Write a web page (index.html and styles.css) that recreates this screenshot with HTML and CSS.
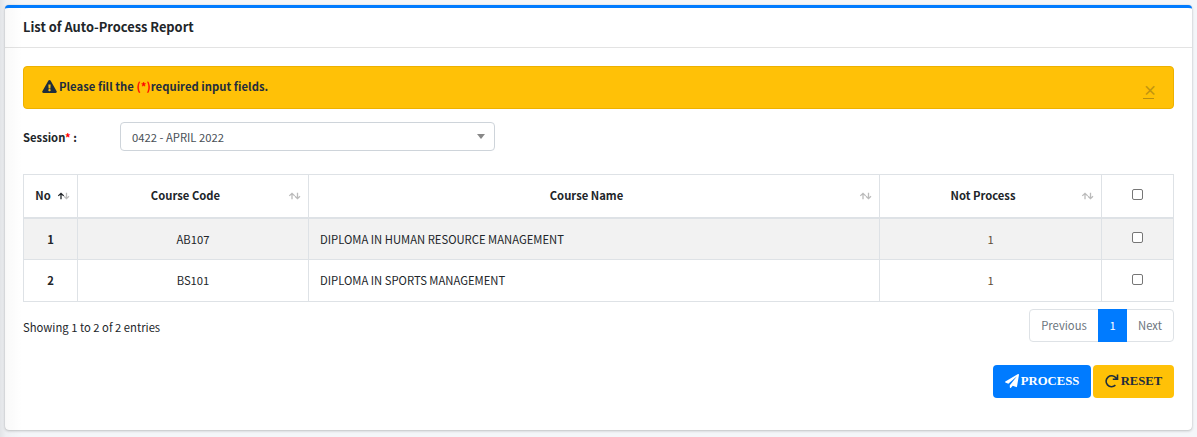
FILE: index.html
```html
<!DOCTYPE html>
<html lang="en">
<head>
<meta charset="utf-8">
<title>List of Auto-Process Report</title>
<link rel="stylesheet" href="styles.css">
</head>
<body>
<svg width="0" height="0" class="defs">
  <symbol id="sort" viewBox="0 0 13 8">
    <path class="down" d="M9.500 .8V6.300M7 4.200L9.500 6.700L12 4.200"/>
    <path class="up" d="M4 7.200V1.700M1.300 3.900L4 1.300L6.700 3.900"/>
  </symbol>
</svg>
<main class="card">
  <header class="card-header"><h1 class="card-title">List of Auto-Process Report</h1></header>
  <div class="card-body">
    <div class="alert">
      <svg class="warn" viewBox="0 0 576 512"><path fill="currentColor" d="M569.5 440C588 472 564.800 512 527.900 512H48.100c-36.900 0-60-40.100-41.600-72L246.400 24c18.500-32 64.700-32 83.200 0l239.900 416zM288 354c-25.400 0-46 20.600-46 46s20.600 46 46 46 46-20.600 46-46-20.600-46-46-46zm-43.700-165.300l7.400 136c.3 6.400 5.600 11.300 12 11.300h48.500c6.400 0 11.600-5 12-11.300l7.400-136c.4-6.900-5.100-12.700-12-12.700h-63.400c-6.900 0-12.300 5.800-11.900 12.700z"/></svg>
      <p class="alert-text">Please fill the <span class="red">(*)</span>required input fields.</p>
      <a class="close">×</a>
    </div>
    <div class="form-row">
      <label class="label">Session<span class="red">*</span> :</label>
      <div class="select"><span>0422 - APRIL 2022</span><i class="caret"></i></div>
    </div>
    <table class="table">
      <colgroup><col class="c-no"><col class="c-code"><col class="c-name"><col class="c-not"><col class="c-check"></colgroup>
      <thead>
        <tr>
          <th><div class="head"><span>No</span><svg class="sort asc"><use href="#sort"/></svg></div></th>
          <th><div class="head"><span>Course Code</span><svg class="sort"><use href="#sort"/></svg></div></th>
          <th><div class="head"><span>Course Name</span><svg class="sort"><use href="#sort"/></svg></div></th>
          <th><div class="head"><span>Not Process</span><svg class="sort"><use href="#sort"/></svg></div></th>
          <th><span class="check"></span></th>
        </tr>
      </thead>
      <tbody>
        <tr class="odd"><td class="num">1</td><td>AB107</td><td class="name">DIPLOMA IN HUMAN RESOURCE MANAGEMENT</td><td class="count">1</td><td><span class="check"></span></td></tr>
        <tr class="even"><td class="num">2</td><td>BS101</td><td class="name">DIPLOMA IN SPORTS MANAGEMENT</td><td class="count">1</td><td><span class="check"></span></td></tr>
      </tbody>
    </table>
    <div class="table-footer">
      <span class="info">Showing 1 to 2 of 2 entries</span>
      <nav class="pages"><a class="page prev">Previous</a><a class="page active">1</a><a class="page next">Next</a></nav>
    </div>
    <div class="actions">
      <button class="btn primary"><svg class="btn-icon" viewBox="0 0 512 512"><path fill="currentColor" d="M476 3.200L12.500 270.600c-18.100 10.400-15.800 35.600 2.200 43.200L121 358.400l287.300-253.200c5.500-4.900 13.300 2.600 8.600 8.300L176 407v80.500c0 23.600 28.500 32.900 42.500 15.800L282 426l124.600 52.200c14.200 6 30.400-2.900 33-18.200l72-432C515 7.800 493.300-6.800 476 3.200z"/></svg><span>PROCESS</span></button>
      <button class="btn warning"><svg class="btn-icon" viewBox="0 0 14 14"><path fill="none" stroke="currentColor" stroke-width="1.600" d="M10.400 11.200A5.500 5.500 0 1 1 10.900 3.800L12.300 5.200M12.500 .6V5.300H7.800"/></svg><span>RESET</span></button>
    </div>
  </div>
</main>
</body>
</html>
```
FILE: styles.css
```css
* { box-sizing: border-box; }
body {
  margin: 0;
  height: 437px;
  padding: 5px 5px 7px;
  overflow: hidden;
  background: #f4f6f9;
  color: #212529;
  font: 11.25px/18px "Noto Sans CJK SC", "Noto Sans", sans-serif;
}
/* shadow cast by the sidebar edge */
body::after {
  content: "";
  position: absolute;
  inset: 0 auto 0 0;
  width: 22px;
  background: linear-gradient(90deg, rgba(0,0,0,.075), rgba(0,0,0,.025) 6px, rgba(0,0,0,0));
  pointer-events: none;
}
.defs { position: absolute; }
.card {
  height: 425px;
  background: #fff;
  border-top: 3px solid #007bff;
  border-radius: 4px;
  box-shadow: 0 0 1px rgba(0,0,0,.2), 0 1px 3px rgba(0,0,0,.2);
}
.card-header { height: 40px; border-bottom: 1px solid #e3e3e3; padding: 10px 18px; }
.card-title { margin: 0; font-size: 12.85px; line-height: 18px; font-weight: 700; }
.card-body { padding: 18px; }
.alert {
  height: 43px;
  display: flex;
  align-items: center;
  padding: 0 18px;
  background: #ffc107;
  border: 1px solid #edb100;
  border-radius: 4px;
  color: #1f2d3d;
}
.warn { width: 15px; height: 13px; margin: -2px 2px 0 0; }
.alert-text { margin: 0 0 3px; flex: 1; font-weight: 700; letter-spacing: .03px; }
.red { color: #f00; }
.close { width: 11px; margin: 5px 1px 0 0; border-bottom: 1px solid #b98f10; color: #c2950f; text-align: center; font-size: 14px; font-weight: 700; line-height: 17px; }
.form-row { display: flex; align-items: center; height: 29px; margin-top: 13px; }
.label { width: 97px; font-weight: 700; }
.select {
  width: 375px;
  height: 29px;
  display: flex;
  align-items: center;
  justify-content: space-between;
  padding: 0 9px 0 11px;
  border: 1px solid #ced4da;
  border-radius: 4px;
  color: #495057;
}
.caret { border: 4px solid transparent; border-top: 5px solid #888; border-bottom: 0; }
.table { width: 1150px; margin-top: 23px; table-layout: fixed; border-collapse: collapse; border: 1px solid #dee2e6; }
.c-no { width: 54px; }
.c-code { width: 231px; }
.c-name { width: 571px; }
.c-not { width: 222px; }
.c-check { width: 72px; }
.table th, .table td { padding: 0; border: 1px solid #dee2e6; text-align: center; }
.table th { height: 43px; border-bottom-width: 2px; padding-bottom: 1px; }
.table td { height: 42px; }
.table .even td { padding-bottom: 1px; }
.head { display: grid; grid-template-columns: 1fr 23px; align-items: center; padding-left: 8px; }
.sort { width: 13px; height: 8px; fill: none; stroke: #bbb; stroke-width: 1.3; margin: 2px 0 0 3px; }
.sort.asc { --up: #212529; }
.up { stroke: var(--up, #bbb); }
.table .name { text-align: left; padding-left: 11px; }
.table .num { font-weight: 700; }
.table .count { color: #5d4a35; }
.odd { background: #f2f2f2; }
.check { display: block; width: 11px; height: 11px; margin: -2px auto 0; border: 1px solid #767676; border-radius: 2px; background: #fff; }
.table-footer { display: flex; justify-content: space-between; margin-top: 7px; }
.info { padding-top: 9px; }
.pages { display: flex; height: 33px; border: 1px solid #dee2e6; border-radius: 4px; color: #6c757d; }
.page { line-height: 31px; text-align: center; }
.prev { width: 68px; }
.next { width: 46px; }
.active { width: 29px; margin: -1px 0; line-height: 33px; background: #007bff; color: #fff; }
.actions { display: flex; justify-content: flex-end; gap: 2px; margin-top: 23px; }
.btn {
  height: 33px;
  display: flex;
  align-items: center;
  justify-content: center;
  gap: 2px;
  padding: 0 0 1px;
  border: 0;
  border-radius: 4px;
  font: 700 12.7px/18px "Liberation Serif", serif;
}
.btn-icon { width: 14px; height: 14px; }
.primary { width: 98px; background: #007bff; color: #fff; }
.warning { width: 81px; background: #ffc107; color: #1f2d3d; }
```
